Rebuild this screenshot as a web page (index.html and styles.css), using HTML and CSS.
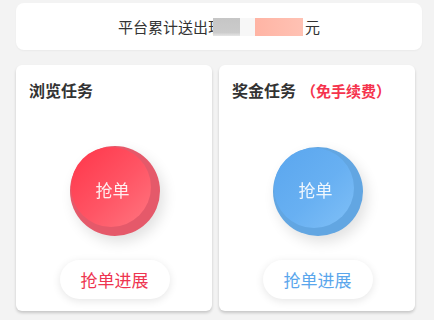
FILE: index.html
```html
<!DOCTYPE html>
<html lang="zh-CN">
<head>
<meta charset="utf-8">
<link rel="stylesheet" href="styles.css">
</head>
<body>
<div class="page">
  <div class="banner">
    <span class="banner-text">平台累计送出现</span><span class="mask">
      <span class="mask-gray"></span><span class="mask-white"></span><span class="mask-pink"></span>
    </span><span class="banner-text unit">元</span>
  </div>
  <div class="cards">
    <div class="card">
      <div class="card-title">浏览任务</div>
      <div class="orb orb-red"><div class="orb-face"></div><span class="orb-label">抢单</span></div>
      <div class="progress progress-red">抢单进展</div>
    </div>
    <div class="card">
      <div class="card-title">奖金任务<span class="note">（免手续费）</span></div>
      <div class="orb orb-blue"><div class="orb-face"></div><span class="orb-label">抢单</span></div>
      <div class="progress progress-blue">抢单进展</div>
    </div>
  </div>
</div>
</body>
</html>
```
FILE: styles.css
```css
* { box-sizing: border-box; }
html, body {
  margin: 0;
  padding: 0;
  background: #f3f3f3;
  font-family: "Noto Sans CJK SC", "Noto Sans", sans-serif;
}
.page {
  width: 434px;
  height: 320px;
  padding: 3px 12px 0 16px;
  overflow: hidden;
}
.banner {
  height: 47px;
  background: #fff;
  border-radius: 8px;
  display: flex;
  align-items: center;
  justify-content: center;
  box-shadow: 0 1px 2px rgba(0,0,0,0.04);
}
.banner-text {
  font-size: 15px;
  color: #333;
  line-height: 20px;
}
.unit { margin-left: 2px; }
.mask {
  position: relative;
  display: flex;
  align-items: center;
  height: 20px;
  margin-left: -10px;
}
.mask-gray {
  width: 27px;
  height: 18px;
  background: linear-gradient(180deg, #c6c6c6 0%, #cbcbcb 80%, #e6e6e6 100%);
  filter: blur(0.7px);
}
.mask-white {
  width: 15px;
  height: 18px;
  background: #f7f7f7;
}
.mask-pink {
  width: 48px;
  height: 18px;
  background: linear-gradient(90deg, #ffb4a4, #ffc2b4);
  filter: blur(0.7px);
}
.cards {
  display: flex;
  gap: 7px;
  margin-top: 15px;
}
.card {
  width: 196px;
  height: 246px;
  background: #fff;
  border-radius: 6px;
  box-shadow: 0 2px 3px rgba(0,0,0,0.18);
  padding: 14px 12px 12px 13px;
  display: flex;
  flex-direction: column;
  align-items: center;
}
.card-title {
  align-self: stretch;
  font-size: 16px;
  line-height: 22px;
  font-weight: bold;
  color: #333;
  white-space: nowrap;
}
.note {
  color: #f5334d;
  font-size: 15px;
  margin-left: 5px;
  font-weight: bold;
}
.orb {
  position: relative;
  width: 90px;
  height: 90px;
  border-radius: 50%;
  margin-top: 45px;
  display: flex;
  align-items: center;
  justify-content: center;
  box-shadow: 4px 6px 14px rgba(0,0,0,0.12);
}
.orb-face {
  position: absolute;
  left: 1px;
  top: 1px;
  width: 80px;
  height: 80px;
  border-radius: 50%;
}
.orb-label {
  position: relative;
  color: #fff;
  font-size: 17px;
  line-height: 20px;
  margin-left: -4px;
  margin-top: -3px;
  opacity: 0.9;
}
.orb-red { background: #e5596a; }
.orb-red .orb-face {
  background: linear-gradient(135deg, #ff3549 0%, #ff5565 55%, #ff7680 100%);
}
.orb-blue { background: #62a6e2; }
.orb-blue .orb-face {
  background: linear-gradient(135deg, #5aa6ee 0%, #68b0f2 55%, #80c0f7 100%);
}
.progress {
  margin-top: 24px;
  width: 110px;
  height: 39px;
  border-radius: 20px;
  background: #fff;
  box-shadow: 0 2px 8px rgba(0,0,0,0.10);
  display: flex;
  align-items: center;
  justify-content: center;
  font-size: 17px;
}
.progress-red { color: #ee3450; }
.progress-blue { color: #5aa6ec; }
```
